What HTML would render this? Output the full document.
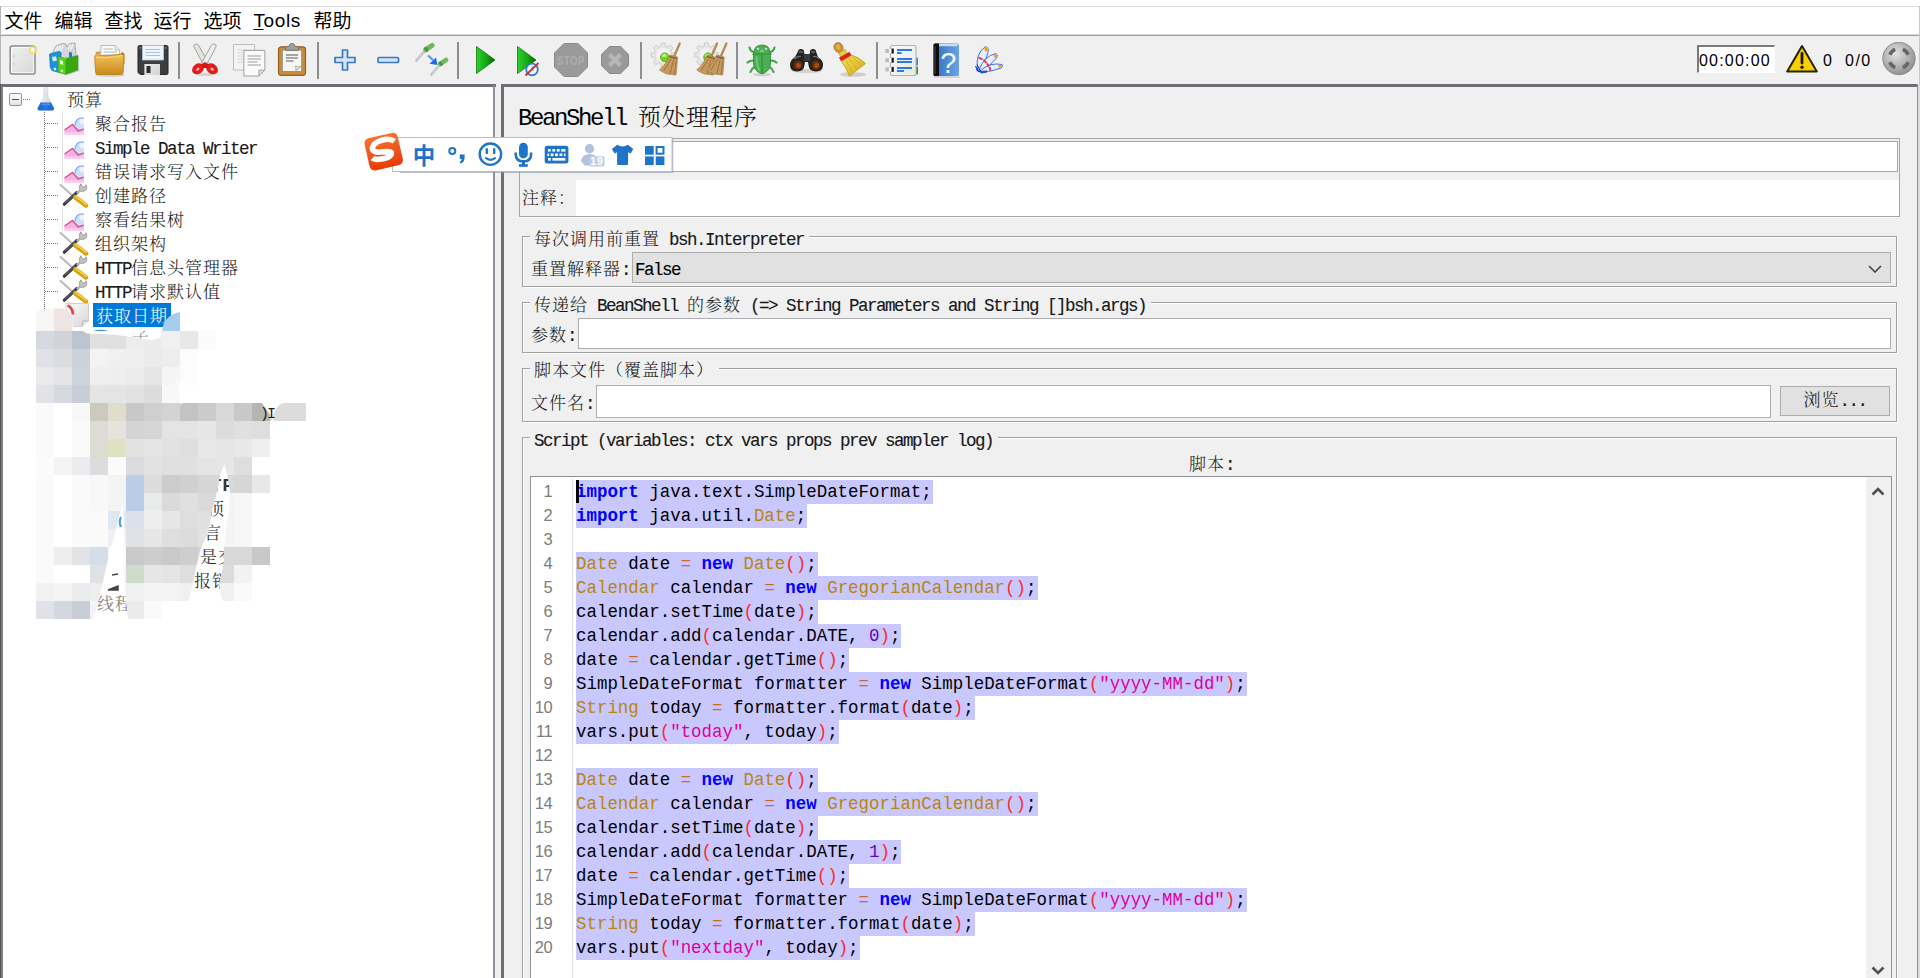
<!DOCTYPE html><html lang="zh-CN"><head><meta charset="utf-8"><title>Apache JMeter</title><style>*{box-sizing:border-box;margin:0;padding:0}
html,body{width:1920px;height:978px;overflow:hidden;background:#fff}
body{position:relative;font-family:"Liberation Mono","Noto Serif CJK SC",serif;font-size:17px;letter-spacing:1px;color:#000}
i{font-style:normal}
.l{font-family:"Liberation Mono",monospace;font-size:17.5px;letter-spacing:-1.5px;-webkit-text-stroke:.12px #000}
.l24{font-family:"Liberation Mono",monospace;font-size:24px;letter-spacing:-2.4px}
#topline{position:absolute;left:0;top:6px;width:1920px;height:1px;background:#dadada}
#leftline{position:absolute;left:0;top:6px;width:1px;height:80px;background:#b4b4b4}
#menubar{letter-spacing:0;position:absolute;left:1px;top:7px;width:1919px;height:27px;background:#fff;font-family:"Liberation Sans","Noto Sans CJK SC",sans-serif;font-size:19px}
.mi{position:absolute;top:1px;line-height:28px;white-space:nowrap;margin-left:-1.500px}
.mi.tools{letter-spacing:.6px;margin-left:-.5px;top:0}
.mi u{text-decoration-thickness:1px;text-underline-offset:2px}
#menuline{position:absolute;left:0;top:34px;width:1920px;height:2px;background:linear-gradient(#d8d8d8 0,#d8d8d8 50%,#a0a0a0 50%)}
#toolbar{position:absolute;left:1px;top:36px;width:1919px;height:48px;background:#f0f0f0}
.tbi{position:absolute;top:6px;width:36px;height:36px;margin-left:-1px}
.tbi svg{display:block}
.sep{position:absolute;top:6px;width:2px;height:37px;background:#8e8e8e;margin-left:-1px}
#timer{letter-spacing:0;position:absolute;left:1696px;top:9px;width:78px;height:28px;background:#fff;border:1px solid #7a7a7a;border-right-color:#fff;border-bottom-color:#fff;border-top-width:2px;border-left-width:2px;font-family:"Liberation Sans",sans-serif;font-size:16px;line-height:28px;white-space:nowrap;overflow:hidden}
#timer span{position:relative;left:0px;letter-spacing:1.2px}
.tbt{letter-spacing:0;position:absolute;top:15px;font-family:"Liberation Sans",sans-serif;font-size:16px;line-height:20px}
#treeframe{position:absolute}
#tree{position:absolute;left:0;top:84px;width:495px;height:894px;background:#fff;border-top:3px solid #6b6f75;border-left:3px solid #6b6f75;border-right:2px solid #8e939b;overflow:hidden}
#divider{position:absolute;left:495px;top:84px;width:6px;height:894px;background:#f0f0f0}
#divider:before{content:"";position:absolute;left:0;top:0;width:1px;height:3px;background:#6b6f75}
#tree>*{position:absolute}
.tt{line-height:19px;height:24px;padding-top:5px;white-space:nowrap;color:#1a1a1a}
.tt.sel{background:#0078d7;color:#fff;padding:5px 2px 0 3px;width:78px}
.ti{width:32px;height:24px}
.ti svg{display:block}
.exp{left:6px;top:6px;width:13px;height:13px;border:1px solid #919191;border-radius:2px;background:linear-gradient(#fff,#e4e4e4)}
.exp i{position:absolute;left:2px;top:5px;width:7px;height:1px;background:#3b4fa0}
.hdot{height:1px;background-image:linear-gradient(90deg,#777 50%,transparent 50%);background-size:2px 1px}
.vdot{width:1px;background-image:linear-gradient(#777 50%,transparent 50%);background-size:1px 2px}
.vdot2{width:1px;background-image:linear-gradient(#aaa 50%,transparent 50%);background-size:1px 2px}
#right{position:absolute;left:0;top:0;width:0;height:0}
#rightbg{position:absolute;left:501px;top:84px;width:1419px;height:894px;background:#f0f0f0;border-top:3px solid #6b6f75;border-left:3px solid #6b6f75}
#title{position:absolute;left:518px;top:105px;font-size:23px;letter-spacing:1px;line-height:28px;white-space:pre}
#namebox{position:absolute;left:519px;top:138px;width:1381px;height:79px;border:1px solid #a6a6a6;box-shadow:0 1px 0 #fafafa}
#namefield{position:absolute;left:56px;top:2px;width:1322px;height:31px;background:#fff;border:1px solid #a2a6b0}
#comment{position:absolute;left:56px;top:41px;width:1323px;height:36px;background:#fff}
.lb{position:absolute;line-height:20px;white-space:nowrap;color:#1a1a1a}
.grp{position:absolute;border:1px solid #a0a0a0;box-shadow:inset 1px 1px 0 #fff,1px 1px 0 #fff}
.gt{position:absolute;left:7px;top:-7px;line-height:20px;background:#f0f0f0;padding:0 5px 0 4px;white-space:pre;color:#1a1a1a}
.combo{position:absolute;background:#e1e1e1;border:1px solid #adadad}
.combo>span{position:absolute;left:2px;top:7px;line-height:20px}
.combo svg{position:absolute;right:8px;top:12px}
.tf{position:absolute;background:#fff;border:1px solid #abadb3}
.btn{position:absolute;background:#e1e1e1;border:1px solid #adadad;text-align:center;line-height:28px;color:#1a1a1a}
#editor{position:absolute;left:530px;top:476px;width:1362px;height:520px;background:#fff;border:1px solid #8e939b}
#gutter{letter-spacing:-.3px;position:absolute;left:0;top:2px;width:42px;height:100%;border-right:1px solid #e0e0e0;font-family:"Liberation Sans",sans-serif;font-size:16.5px;color:#7c7c7c;text-align:right;padding-right:19.5px;line-height:24px}
#code{letter-spacing:0;position:absolute;left:45px;top:3px;font-family:"Liberation Mono",monospace;font-size:17.45px;line-height:24px;white-space:nowrap}
#code div{height:24px;white-space:pre}
.hl{background:#c8c8ff;display:inline-block;height:24px;padding-right:1px}
.k{color:#0000ff;font-weight:bold}
.t{color:#b8860b}
.p{color:#ff2828}
.s{color:#dc009c}
.n{color:#6400c8}
.o{color:#d2691e}
#caret{position:absolute;left:45px;top:3px;width:3px;height:23px;background:#000}
#vsb{position:absolute;right:0;top:0;width:25px;height:100%;background:#f0f0f0}
#vsb svg{position:absolute;left:5px}
#rightedge{position:absolute;left:1917px;top:84px;width:3px;height:894px;background:#dcdcdc;border-left:1px solid #8a8f98}
#rightedge2{position:absolute;left:1919px;top:6px;width:1px;height:78px;background:#c8c8c8}
#ime{position:absolute;left:360px;top:128px;width:320px;height:52px}
#ime svg{display:block}
#mosaic{left:27px;top:203px;width:290px;height:340px}
#mosaic svg{display:block}
.tt,.lb,.gt,.btn,#title{font-weight:300}
.l,.l24{font-weight:400}
#leftdark{position:absolute;left:0;top:84px;width:1px;height:894px;background:#555}
#tree{border-left-color:#7c8088}
</style></head><body>
<div id="topline"></div><div id="leftline"></div><div id="menubar">
<span class="mi" style="left:5px">文件</span>
<span class="mi" style="left:55px">编辑</span>
<span class="mi" style="left:105px">查找</span>
<span class="mi" style="left:154px">运行</span>
<span class="mi" style="left:204px">选项</span>
<span class="mi tools" style="left:253px"><u>T</u>ools</span>
<span class="mi" style="left:314px">帮助</span>
</div><div id="menuline"></div>
<div id="toolbar">
<span class="tbi" style="left:4px"><svg width="36" height="36" viewBox="0 0 36 36"><defs>
<linearGradient id="gPaper" x1="0" y1="0" x2="1" y2="1"><stop offset="0" stop-color="#fdfdfd"/><stop offset="1" stop-color="#d6d6d6"/></linearGradient>
<linearGradient id="gFolder" x1="0" y1="0" x2="0" y2="1"><stop offset="0" stop-color="#f3c35a"/><stop offset="1" stop-color="#c98a1c"/></linearGradient>
<linearGradient id="gGreen" x1="0" y1="0" x2="1" y2="0"><stop offset="0" stop-color="#2fd12f"/><stop offset="0.6" stop-color="#12a012"/><stop offset="1" stop-color="#066006"/></linearGradient>
<linearGradient id="gBook" x1="0" y1="0" x2="1" y2="0"><stop offset="0" stop-color="#2f6fc0"/><stop offset="1" stop-color="#6aa4e6"/></linearGradient>
<radialGradient id="gRound" cx="0.4" cy="0.35" r="0.7"><stop offset="0" stop-color="#e2e2e2"/><stop offset="1" stop-color="#8c8c8c"/></radialGradient>
<linearGradient id="gSogou" x1="0" y1="0" x2="0" y2="1"><stop offset="0" stop-color="#f8722c"/><stop offset="1" stop-color="#e63c0a"/></linearGradient>
<linearGradient id="gBroom" x1="0" y1="0" x2="1" y2="1"><stop offset="0" stop-color="#f7e35c"/><stop offset="1" stop-color="#d4a514"/></linearGradient>
<linearGradient id="gFlask" x1="0" y1="0" x2="1" y2="0"><stop offset="0" stop-color="#f4f6f8"/><stop offset="1" stop-color="#c9ced6"/></linearGradient>
</defs><rect x="6.200" y="4" width="24.800" height="28" rx="2" fill="#fff" stroke="#8a8a8a" stroke-width="1.500"/><rect x="8" y="5.800" width="21.200" height="24.400" fill="url(#gPaper)"/><rect x="8" y="5.800" width="21.200" height="24.400" fill="#dedede" opacity=".45"/><circle cx="29.200" cy="8" r="3.400" fill="#fffde8" stroke="#f0e25a" stroke-width="2.200" opacity=".75"/><circle cx="9.600" cy="14.300" r=".9" fill="#fff" stroke="#aaa" stroke-width=".5"/><circle cx="9.600" cy="22.300" r=".9" fill="#fff" stroke="#aaa" stroke-width=".5"/></svg></span>
<span class="tbi" style="left:47px"><svg width="36" height="36" viewBox="0 0 36 36"><path d="M20 33l13-4.500-3-2z" fill="#000" opacity=".25"/><path d="M5.500 11l3.500-7 6-2.500 4 .5 1 3 2.500-3.500 5.500-.5 1 12-5 2.500-13 .5z" fill="#d2d6da" stroke="#9aa2aa" stroke-width=".8"/><path d="M8 9l3-5M10.500 9.500l3-6M13 10l3-6.500M21 7.500l2.500-5M23.500 8l2.500-5.500" stroke="#fbfbfb" stroke-width="1.100"/><path d="M2.600 12l9.400-2.500 2 .8V31l-9-2.500-1.800-3.500z" fill="#1d92dc" stroke="#0f6fb4" stroke-width=".7"/><path d="M22 10l3 .5v5l-3-.5z" fill="#1680cc"/><path d="M4.800 15l4.200-.8 1 4.200-4 1zM6.500 26l2.400-.4.400 2.300-2.200.5z" fill="#d4ecfb"/><path d="M11.400 14.500l7 2.500 12.600-3.500V27.500L18.500 32.500l-7.100-2.500z" fill="#3fbf14" stroke="#2a9a10" stroke-width=".7"/><path d="M18.500 17l12.500-3.500V27.500L18.500 32.500z" fill="#38a60e"/><path d="M11.400 14.500l7 2.500v15.500l-7-2.500z" fill="#58d01e"/><path d="M12.800 18l3.200 1 .3 4-3.300-1zM13.800 27.500l2 .6v2.200l-2-.6z" fill="#def7d2"/></svg></span>
<span class="tbi" style="left:92px"><svg width="36" height="36" viewBox="0 0 36 36"><ellipse cx="18" cy="33" rx="15" ry="1.800" fill="#000" opacity=".14"/><path d="M29 10.500h2q1.500 0 1.500 1.500v10h-3.500z" fill="#b98418"/><path d="M3.500 11.500q0-2 2-2h4l1.500 2.500h-7.500z" fill="#dba030"/><path d="M9 3.500h14l4.600 4.600v10H8.600z" fill="#fbfbfb" stroke="#b4b4b4" stroke-width=".9"/><path d="M23 3.500v4.600h4.600" fill="#e6e6e6" stroke="#b4b4b4" stroke-width=".7"/><path d="M11.500 7h9.500M11.500 10h13.500M11.500 13h13.500" stroke="#cfcfcf" stroke-width="1.300"/><path d="M2.800 14.500q0-2 2.200-1.800l5 .8q3 .5 6 .2l13-1.500q3-.3 2.900 2.300l-.7 15.500q0 2.500-2.500 2.500H6q-2.400 0-2.500-2.500z" fill="url(#gFolder)" stroke="#b98418" stroke-width=".9"/><path d="M4 15.200q8 1.500 26-1.500" stroke="#f8d880" stroke-width="1" fill="none"/></svg></span>
<span class="tbi" style="left:135px"><svg width="36" height="36" viewBox="0 0 36 36"><path d="M3 5q0-1.500 1.500-1.500h27q1.500 0 1.500 1.500v26q0 1.500-1.500 1.500H5.500L3 30.500z" fill="#3e3e40" stroke="#262628" stroke-width="1"/><rect x="7.500" y="3.500" width="21" height="14.500" fill="#eef4fb" stroke="#b4c8e0" stroke-width=".8"/><path d="M10.500 7.500h14.500M10.500 10.500h14.500M10.500 13.500h14.500" stroke="#a4c2e6" stroke-width="1.100"/><rect x="9.500" y="22" width="15.500" height="11" fill="#cfcfd1"/><rect x="9.500" y="22" width="15.500" height="11" fill="url(#gPaper)" opacity=".55"/><rect x="11.500" y="24" width="4" height="7" fill="#2e2e30"/><rect x="4.500" y="5" width="1.800" height="1.800" fill="#777"/><rect x="29.700" y="5" width="1.800" height="1.800" fill="#777"/></svg></span>
<i class="sep" style="left:178px"></i>
<span class="tbi" style="left:187px"><svg width="36" height="36" viewBox="0 0 36 36"><ellipse cx="18" cy="32.500" rx="9" ry="1.600" fill="#000" opacity=".12"/><path d="M6.700 4.200q.4-2.400 2.800-2.200 1.600.2 2.400 1.800l9.300 16.700-4.400 2.800z" fill="#e4e4e2" stroke="#a2a29c" stroke-width="1"/><path d="M29.300 4.200q-.4-2.400-2.800-2.200-1.600.2-2.400 1.800l-9.300 16.700 4.400 2.800z" fill="#eeeeec" stroke="#a2a29c" stroke-width="1"/><ellipse cx="11" cy="26.800" rx="6.300" ry="5" transform="rotate(-35 11 26.800)" fill="#e01c1c"/><ellipse cx="25" cy="26.800" rx="6.300" ry="5" transform="rotate(35 25 26.800)" fill="#e01c1c"/><path d="M14.500 22.500l3.500-2.500 3.500 2.500-1.500 3.500h-4z" fill="#d01414"/><ellipse cx="10.800" cy="27.200" rx="2" ry="1.300" transform="rotate(-35 10.800 27.200)" fill="#f6b0b0"/><ellipse cx="25.200" cy="27.200" rx="2" ry="1.300" transform="rotate(35 25.200 27.200)" fill="#f6b0b0"/></svg></span>
<span class="tbi" style="left:230px"><svg width="36" height="36" viewBox="0 0 36 36"><path d="M3.500 2.500h21v25.500H3.500z" fill="#f4f4f4" stroke="#bcbcbc" stroke-width="1"/><path d="M7 8h12M7 11h12M7 14h8M7 17h7M7 20h6" stroke="#d6d6d6" stroke-width="1.100"/><path d="M13.900 8.400h21v19.600l-6 6H13.900z" fill="#fafafa" stroke="#9e9e9e" stroke-width="1"/><path d="M28.900 34v-6h6z" fill="#dedede" stroke="#9e9e9e" stroke-width=".9"/><path d="M17.500 14h13.500M17.500 17h13.500M17.500 20h10M17.500 23h13.500" stroke="#bcbcbc" stroke-width="1.300"/></svg></span>
<span class="tbi" style="left:274px"><svg width="36" height="36" viewBox="0 0 36 36"><rect x="4.500" y="4.800" width="27" height="28.500" rx="2.800" fill="#c98d3a" stroke="#93621c" stroke-width="1.200"/><rect x="8.300" y="8" width="19.400" height="21.500" fill="#f5f5f3" stroke="#8e8e8a" stroke-width=".9"/><path d="M21.500 29.500q1-3-.5-5.500 3.500 1.500 6.700 0z" fill="#d8d8d4" stroke="#a4a4a0" stroke-width=".7"/><path d="M12 13h12M12 16h12M12 19h7.500" stroke="#8c8c88" stroke-width="1.300"/><path d="M11.500 8.300v-2.500q0-1.300 1.300-1.300h2q.5-3 3.200-3t3.200 3h2q1.300 0 1.300 1.300v2.500z" fill="#a2a29c" stroke="#6e6e68" stroke-width=".9"/></svg></span>
<i class="sep" style="left:317px"></i>
<span class="tbi" style="left:327px"><svg width="36" height="36" viewBox="0 0 36 36"><path d="M15.500 8h5v7.500h7.500v5h-7.500v7.500h-5v-7.500h-7.500v-5h7.500z" fill="#d4e3f6" stroke="#3b78c4" stroke-width="1.700" stroke-linejoin="round"/></svg></span>
<span class="tbi" style="left:370px"><svg width="36" height="36" viewBox="0 0 36 36"><rect x="8" y="15.500" width="20.500" height="5" rx="1" fill="#d4e3f6" stroke="#3b78c4" stroke-width="1.700"/></svg></span>
<span class="tbi" style="left:413px"><svg width="36" height="36" viewBox="0 0 36 36"><path d="M3.500 18.500L12.500 8" stroke="#b4baba" stroke-width="2.600" stroke-linecap="round"/><path d="M4 18L12.500 8" stroke="#f2f4f4" stroke-width="1" stroke-dasharray="1.500 1"/><path d="M12.800 7.600L19 3.500" stroke="#6fb85c" stroke-width="5" stroke-linecap="round"/><path d="M12 8.200l2.500-1.600" stroke="#4c9444" stroke-width="5"/><path d="M18.500 32.500L27 22.500" stroke="#b4baba" stroke-width="2.400" stroke-linecap="round"/><path d="M19 32L27 22.500" stroke="#f2f4f4" stroke-width="1" stroke-dasharray="1.500 1"/><path d="M27.300 21.800L33 18" stroke="#6fb85c" stroke-width="4.600" stroke-linecap="round"/><path d="M26.600 22.400l2.300-1.500" stroke="#4c9444" stroke-width="4.600"/><path d="M15 13.500l5 4.500" stroke="#4d92f4" stroke-width="2"/><path d="M24.500 23l-8-1.200 6.500-6.300z" fill="#1a6ef0"/></svg></span>
<i class="sep" style="left:457px"></i>
<span class="tbi" style="left:467px"><svg width="36" height="36" viewBox="0 0 36 36"><path d="M9.500 4.500v27L28 18z" fill="url(#gGreen)" stroke="#0a7a0a" stroke-width=".8" stroke-linejoin="round"/></svg></span>
<span class="tbi" style="left:510px"><svg width="36" height="36" viewBox="0 0 36 36"><path d="M7.500 4.500v27L26 18z" fill="url(#gGreen)" stroke="#0a7a0a" stroke-width=".8" stroke-linejoin="round"/><circle cx="22" cy="27.500" r="5.800" fill="#f4f8fc" stroke="#2f7bd0" stroke-width="1.800"/><path d="M22 24v3.500l2 1.500" stroke="#8fb4dc" stroke-width="1" fill="none"/><path d="M15.500 33.500l13-12.500" stroke="#e02828" stroke-width="1.800"/></svg></span>
<span class="tbi" style="left:553px"><svg width="36" height="36" viewBox="0 0 36 36"><path d="M11 1.500h14l9.500 9.500v14l-9.500 9.500h-14l-9.500-9.500v-14z" fill="#9a9a9a" stroke="#8a8a8a" stroke-width="1"/><text x="18" y="22.500" text-anchor="middle" font-family="Liberation Sans,sans-serif" font-weight="bold" font-size="12" fill="#aeaeae" textLength="28" lengthAdjust="spacingAndGlyphs">STOP</text></svg></span>
<span class="tbi" style="left:597px"><svg width="36" height="36" viewBox="0 0 36 36"><path d="M12.400 4.500h11.200l7.900 7.900v11.200l-7.900 7.900H12.400l-7.900-7.900V12.400z" fill="#9a9a9a" stroke="#8a8a8a" stroke-width="1"/><path d="M12.500 12.500l11 11M23.500 12.500l-11 11" stroke="#b6b6b6" stroke-width="4.200"/></svg></span>
<i class="sep" style="left:640px"></i>
<span class="tbi" style="left:648px"><svg width="36" height="36" viewBox="0 0 36 36"><path d="M13.1 1.0 L17.3 1.0 L17.3 4.1 L20.0 5.2 L22.2 3.0 L25.2 6.0 L23.0 8.2 L24.1 10.9 L27.2 10.9 L27.2 15.1 L24.1 15.1 L23.0 17.8 L25.2 20.0 L22.2 23.0 L20.0 20.8 L17.3 21.9 L17.3 25.0 L13.1 25.0 L13.1 21.9 L10.4 20.8 L8.2 23.0 L5.2 20.0 L7.4 17.8 L6.3 15.1 L3.2 15.1 L3.2 10.9 L6.3 10.9 L7.4 8.2 L5.2 6.0 L8.2 3.0 L10.4 5.2 L13.1 4.1z" fill="#e6e6e6" stroke="#cdcdcd" stroke-width="1" stroke-linejoin="round"/><circle cx="15.200" cy="13" r="7" fill="#f2f2f2"/><circle cx="16.800" cy="15.300" r="4.400" fill="#76d41e" stroke="#55aa10" stroke-width=".8"/><ellipse cx="16.200" cy="13.600" rx="2.400" ry="1.500" fill="#c8f294"/><g transform="translate(0 0)"><path d="M31.700 1.500L26.500 13.500" stroke="#b08850" stroke-width="2.200" stroke-linecap="round"/><path d="M22 13l7.500 2q-.5 9-1.500 18l-9-1q-4-1.500-7.500-4 7-6 10.500-15z" fill="#c49a62" stroke="#a67c44" stroke-width=".7"/><path d="M23 17l-7 11.500M25.500 18l-3.500 14M28 19l-1.500 14" stroke="#9c7038" stroke-width=".9"/><path d="M21.500 14.500l7.500 2.200" stroke="#8a6030" stroke-width="1.500"/></g></svg></span>
<span class="tbi" style="left:693px"><svg width="36" height="36" viewBox="0 0 36 36"><g transform="translate(-1.700 0)"><path d="M13.1 1.0 L17.3 1.0 L17.3 4.1 L20.0 5.2 L22.2 3.0 L25.2 6.0 L23.0 8.2 L24.1 10.9 L27.2 10.9 L27.2 15.1 L24.1 15.1 L23.0 17.8 L25.2 20.0 L22.2 23.0 L20.0 20.8 L17.3 21.9 L17.3 25.0 L13.1 25.0 L13.1 21.9 L10.4 20.8 L8.2 23.0 L5.2 20.0 L7.4 17.8 L6.3 15.1 L3.2 15.1 L3.2 10.9 L6.3 10.9 L7.4 8.2 L5.2 6.0 L8.2 3.0 L10.4 5.2 L13.1 4.1z" fill="#e6e6e6" stroke="#cdcdcd" stroke-width="1" stroke-linejoin="round"/><circle cx="15.200" cy="13" r="7" fill="#f2f2f2"/><circle cx="16.800" cy="15.300" r="4.400" fill="#76d41e" stroke="#55aa10" stroke-width=".8"/><ellipse cx="16.200" cy="13.600" rx="2.400" ry="1.500" fill="#c8f294"/></g><g transform="translate(-7.7 0)"><path d="M31.700 1.500L26.500 13.500" stroke="#b08850" stroke-width="2.200" stroke-linecap="round"/><path d="M22 13l7.500 2q-.5 9-1.500 18l-9-1q-4-1.500-7.500-4 7-6 10.500-15z" fill="#c49a62" stroke="#a67c44" stroke-width=".7"/><path d="M23 17l-7 11.500M25.500 18l-3.500 14M28 19l-1.500 14" stroke="#9c7038" stroke-width=".9"/><path d="M21.500 14.500l7.500 2.200" stroke="#8a6030" stroke-width="1.500"/></g><g transform="translate(1.7 0)"><path d="M31.700 1.500L26.500 13.500" stroke="#b08850" stroke-width="2.200" stroke-linecap="round"/><path d="M22 13l7.500 2q-.5 9-1.500 18l-9-1q-4-1.500-7.500-4 7-6 10.500-15z" fill="#c49a62" stroke="#a67c44" stroke-width=".7"/><path d="M23 17l-7 11.500M25.500 18l-3.500 14M28 19l-1.500 14" stroke="#9c7038" stroke-width=".9"/><path d="M21.500 14.500l7.500 2.200" stroke="#8a6030" stroke-width="1.500"/></g></svg></span>
<i class="sep" style="left:736px"></i>
<span class="tbi" style="left:744px"><svg width="36" height="36" viewBox="0 0 36 36"><ellipse cx="18" cy="32.500" rx="9" ry="1.800" fill="#000" opacity=".13"/><path d="M10.500 10.500q-4-1-5-5M25.500 10.500q4-1 5-5M9.500 18.500q-4 0-6 2M26.500 18.500q4 0 6 2M10.500 25q-3 1.500-4 5M25.500 25q3 1.500 4 5" stroke="#4aa252" stroke-width="2.200" stroke-linecap="round" fill="none"/><path d="M10 11q0-8 8-8t8 8l1.500 1.500H8.500z" fill="#4cb052" stroke="#2e8436" stroke-width=".8"/><circle cx="14" cy="6.800" r="1.100" fill="#bfe8ff"/><circle cx="22" cy="6.800" r="1.100" fill="#bfe8ff"/><path d="M15.500 10l2.500-3 2.500 3z" fill="#7fd086"/><path d="M9.500 14q0-2 2-2h13q2 0 2 2v7q0 8-8.500 11-8.500-3-8.500-11z" fill="#48b050" stroke="#2e8436" stroke-width=".8"/><path d="M18 12.500v19" stroke="#2e8436" stroke-width="1"/><path d="M12.500 14.500q0 10 3.500 14" stroke="#8fd894" stroke-width="1.500" fill="none" opacity=".7"/></svg></span>
<span class="tbi" style="left:789px"><svg width="36" height="36" viewBox="0 0 36 36"><ellipse cx="18" cy="29" rx="15" ry="2" fill="#000" opacity=".12"/><path d="M9 9.500q0-2.500 3-2.500t3 2.500l.5 3h5l.5-3q0-2.500 3-2.500t3 2.500l2 5.500q5 3 5 8 0 6.500-7 6.500t-7.500-6.500l-.5-3h-3l-.5 3q-.5 6.500-7.500 6.500t-7-6.500q0-5 5-8z" fill="#232323"/><path d="M10 10h4M22 10h4" stroke="#6a6a6a" stroke-width="1.400"/><path d="M5.500 17q2.500-3 6.500-2.500M24 14.500q4-.5 6.500 2.500" stroke="#777" stroke-width="1.200" fill="none"/><rect x="15" y="12" width="6" height="7" fill="#3a3a3a"/><circle cx="8.900" cy="23" r="4.300" fill="#6a2c08"/><circle cx="27.100" cy="23" r="4.300" fill="#6a2c08"/><circle cx="9.400" cy="23.600" r="2.500" fill="#a84c0c"/><circle cx="27.600" cy="23.600" r="2.500" fill="#a84c0c"/></svg></span>
<span class="tbi" style="left:833px"><svg width="36" height="36" viewBox="0 0 36 36"><ellipse cx="20" cy="32.500" rx="13" ry="2.300" fill="#000" opacity=".14"/><ellipse cx="5.500" cy="5.500" rx="4.300" ry="5" transform="rotate(-25 5.500 5.500)" fill="#cf9436" stroke="#a8721c" stroke-width=".8"/><ellipse cx="5.200" cy="5" rx="1.800" ry="2.800" transform="rotate(-25 5.200 5)" fill="#e2b05a"/><path d="M5.500 11l6.500-3.500 2.500 4.500-6 4.500z" fill="#e6d030" stroke="#b8a010" stroke-width=".7"/><path d="M8.500 19.500L18.500 13q8 2.500 14 8.500l-16 12.500q-3-8-8-14.500z" fill="url(#gBroom)" stroke="#c4a010" stroke-width=".9"/><path d="M13 19q4 5 6 12M16 17q5 5 8.500 11M19 15q5 4 9.500 9" stroke="#d0ac1c" stroke-width=".9" fill="none"/><path d="M7 17.500L17.400 11.500" stroke="#e02020" stroke-width="4.200"/></svg></span>
<i class="sep" style="left:876px"></i>
<span class="tbi" style="left:884px"><svg width="36" height="36" viewBox="0 0 36 36"><rect x="30" y="15.500" width="4" height="8" rx="1" fill="#2f7fe0"/><rect x="30" y="24.500" width="4" height="8" rx="1" fill="#20a020"/><rect x="6.500" y="3.500" width="25.500" height="30" rx="2" fill="#f8f8f8" stroke="#b0b0b0" stroke-width="1.100"/><rect x="7.500" y="4.500" width="23.500" height="28" rx="1.500" fill="url(#gPaper)" opacity=".5"/><g stroke="#2a7ae4" stroke-width="1.800"><path d="M13 8h15M13 17h15M13 20h15M13 26h15"/><path d="M13 11h4.500M13 29h7"/></g><g><rect x="1.500" y="7" width="4" height="4" fill="#b8b8b8"/><rect x="5" y="7" width="3" height="4" fill="#fff"/><rect x="7.500" y="6.500" width="2.300" height="5" fill="#1a1a1a"/><rect x="1.500" y="16.200" width="4" height="4" fill="#b8b8b8"/><rect x="5" y="16.200" width="3" height="4" fill="#fff"/><rect x="7.500" y="15.700" width="2.300" height="5" fill="#1a1a1a"/><rect x="1.500" y="25.400" width="4" height="4" fill="#b8b8b8"/><rect x="5" y="25.400" width="3" height="4" fill="#fff"/><rect x="7.500" y="24.900" width="2.300" height="5" fill="#1a1a1a"/></g></svg></span>
<span class="tbi" style="left:929px"><svg width="36" height="36" viewBox="0 0 36 36"><path d="M5 35h26" stroke="#000" stroke-width="1.200" opacity=".18"/><rect x="4.500" y="1.500" width="25.500" height="32.500" rx="1.800" fill="url(#gBook)"/><path d="M7 2h21.500v2.200H7z" fill="#d4dce6"/><path d="M4.500 3q0-1.500 1.500-1.500h4v32.500H6q-1.500 0-1.500-1.500z" fill="#0e0e0e"/><path d="M6 4v28" stroke="#555" stroke-width=".8"/><text x="19.800" y="30.500" text-anchor="middle" font-family="Liberation Sans,sans-serif" font-size="29" fill="#f4f8ff">?</text></svg></span>
<span class="tbi" style="left:972px"><svg width="36" height="36" viewBox="0 0 36 36"><g stroke="#2f5fdc" stroke-width=".9" fill="#e6eeff"><path d="M5.500 27Q3 12 13.500 4.500q3.500 1 2.500 6-2 10-8.500 18z"/><path d="M7 28Q12 14 24 11.500q2.500 1.500.500 4.500-6 8-15.500 13z"/><path d="M8 29Q18 20 30 22.500q1.500 2-1 3.500-10 4-20 4z"/></g><path d="M3.500 24l3 6M5 22.500l4 7.500M7 29.500l8-.500M4 27.500l6 3.500M9 31l6-1" stroke="#1c44c8" stroke-width="1.100"/><path d="M12.200 6.500l2.800-1.800.8 3.800-2.400 1.500z" fill="#f2a01e"/><path d="M21.500 13.200l3-1.300.2 3-2.400 1.200z" fill="#f2a01e"/><path d="M26.500 22.700l3.500.2-.8 2.400-2.900.3z" fill="#f2a01e"/><path d="M6.500 15.500l4 2M11.500 17.500l3 3.500M15 21.500l2 3M17.500 25l1 3.500" stroke="#e03038" stroke-width="1.900"/></svg></span>
<div id="timer"><span>00:00:00</span></div>
<span class="tbi" style="left:1784px"><svg width="36" height="36" viewBox="0 0 36 36"><path d="M18 4L32.800 29.500H3.200z" fill="#f8d000" stroke="#2a2200" stroke-width="2" stroke-linejoin="round"/><path d="M18 11.500v9.500" stroke="#1a1a1a" stroke-width="2.800" stroke-linecap="round"/><circle cx="18" cy="25.300" r="1.700" fill="#1a1a1a"/></svg></span>
<span class="tbt" style="left:1822px">0</span><span class="tbt" style="left:1844px;letter-spacing:1.5px">0/0</span>
<span class="tbi" style="left:1881px"><svg width="36" height="36" viewBox="0 0 36 36"><circle cx="18" cy="16.500" r="16.300" fill="url(#gRound)" stroke="#8e8e8e" stroke-width="1"/><g fill="none" stroke="#666" stroke-width="3.600"><path d="M14.200 7.300a10 10 0 0 1 7.600 0" transform="rotate(45 18 16.500)"/><path d="M14.200 7.300a10 10 0 0 1 7.600 0" transform="rotate(135 18 16.500)"/><path d="M14.200 7.300a10 10 0 0 1 7.600 0" transform="rotate(225 18 16.500)"/><path d="M14.200 7.300a10 10 0 0 1 7.600 0" transform="rotate(315 18 16.500)"/></g></svg></span>
</div>
<div id="tree">
<i class="vdot" style="left:41px;top:25px;height:207px"></i>
<span class="exp"><i></i></span><i class="hdot" style="left:20px;top:12px;width:8px"></i>
<span class="ti" style="left:32px;top:0px"><svg width="32" height="24" viewBox="0 0 32 24" overflow="visible"><path d="M8.600 1h4.400v8.500l5.800 11.300q1 2.700-2 2.700H4.800q-3 0-2-2.700L8.600 9.500z" fill="url(#gFlask)" stroke="#cfd4da" stroke-width=".5"/><path d="M5.600 15.500h10.400l2.800 5.300q1 2.700-2 2.700H4.800q-3 0-2-2.700z" fill="#1d6fd8"/><path d="M6.500 17.200h8.600" stroke="#5b9cec" stroke-width="1.300"/><path d="M9.700 17.500v5M12 17.500v5" stroke="#3f86e4" stroke-width=".8"/><rect x="8" y=".3" width="5.600" height="1.500" fill="#e6e9ed"/></svg></span>
<span class="tt" style="left:64px;top:0px">预算</span>
<i class="hdot" style="left:42px;top:36px;width:14px"></i>
<span class="ti" style="left:59px;top:24px"><svg width="32" height="24" viewBox="0 0 32 24" overflow="visible"><path d="M.5 0v24" stroke="#c4c4c4" stroke-width="1" stroke-dasharray="1 1"/><path d="M.5 0v24" stroke="#e2e2e2" stroke-width="1"/><path d="M13 14.500q.5-6 4.500-7.200 2-.5 4.300-.5v11.500l-5.500 1.800z" fill="#cfe0ff"/><path d="M17 9q2-1.800 4.800-1.800v6q-3 2-4.800-4.200z" fill="#eef4ff"/><path d="M13 14.500q.5-6 4.500-7.200 2-.5 4.300-.5" fill="none" stroke="#86aef6" stroke-width="1.300"/><path d="M2.500 19l8-5.500 5.800 6.400 5.500-1.800v5.500H2.500z" fill="#f6b4e6"/><path d="M2.500 21.300h19.300v2.300H2.500z" fill="#f9ccee"/><path d="M2.500 19l8-5.500 5.800 6.400 5.500-1.800" fill="none" stroke="#d6508c" stroke-width="1.500"/></svg></span>
<span class="tt" style="left:92px;top:24px">聚合报告</span>
<i class="hdot" style="left:42px;top:60px;width:14px"></i>
<span class="ti" style="left:59px;top:48px"><svg width="32" height="24" viewBox="0 0 32 24" overflow="visible"><path d="M.5 0v24" stroke="#c4c4c4" stroke-width="1" stroke-dasharray="1 1"/><path d="M.5 0v24" stroke="#e2e2e2" stroke-width="1"/><path d="M13 14.500q.5-6 4.500-7.200 2-.5 4.300-.5v11.500l-5.500 1.800z" fill="#cfe0ff"/><path d="M17 9q2-1.800 4.800-1.800v6q-3 2-4.800-4.200z" fill="#eef4ff"/><path d="M13 14.500q.5-6 4.500-7.200 2-.5 4.300-.5" fill="none" stroke="#86aef6" stroke-width="1.300"/><path d="M2.500 19l8-5.500 5.800 6.400 5.500-1.800v5.500H2.500z" fill="#f6b4e6"/><path d="M2.500 21.300h19.300v2.300H2.500z" fill="#f9ccee"/><path d="M2.500 19l8-5.500 5.800 6.400 5.500-1.800" fill="none" stroke="#d6508c" stroke-width="1.500"/></svg></span>
<span class="tt" style="left:92px;top:48px"><span class="l">Simple Data Writer</span></span>
<i class="hdot" style="left:42px;top:84px;width:14px"></i>
<span class="ti" style="left:59px;top:72px"><svg width="32" height="24" viewBox="0 0 32 24" overflow="visible"><path d="M.5 0v24" stroke="#c4c4c4" stroke-width="1" stroke-dasharray="1 1"/><path d="M.5 0v24" stroke="#e2e2e2" stroke-width="1"/><path d="M13 14.500q.5-6 4.500-7.200 2-.5 4.300-.5v11.500l-5.500 1.800z" fill="#cfe0ff"/><path d="M17 9q2-1.800 4.800-1.800v6q-3 2-4.800-4.200z" fill="#eef4ff"/><path d="M13 14.500q.5-6 4.500-7.200 2-.5 4.300-.5" fill="none" stroke="#86aef6" stroke-width="1.300"/><path d="M2.500 19l8-5.500 5.800 6.400 5.500-1.800v5.500H2.500z" fill="#f6b4e6"/><path d="M2.500 21.300h19.300v2.300H2.500z" fill="#f9ccee"/><path d="M2.500 19l8-5.500 5.800 6.400 5.500-1.800" fill="none" stroke="#d6508c" stroke-width="1.500"/></svg></span>
<span class="tt" style="left:92px;top:72px">错误请求写入文件</span>
<i class="hdot" style="left:42px;top:108px;width:14px"></i>
<span class="ti" style="left:59px;top:96px"><svg width="32" height="24" viewBox="0 0 32 24" overflow="visible"><path d="M-1.500 1.800L11.500 13.500" stroke="#9a9a9a" stroke-width="1.700" stroke-linecap="round"/><path d="M-1.500 1.800L11 13" stroke="#e8e8e8" stroke-width=".7"/><path d="M2.300 21.200L14.500 9.800" stroke="#3c3c3c" stroke-width="3.200" stroke-linecap="round"/><path d="M3 20L13 10.600" stroke="#7a7a7a" stroke-width=".8"/><path d="M14.500 9.800l3-3q-1.200-3.600 1.400-6l1.400 2.900 2.400.4 1.300-2.400q2 3.200-.6 5.800-2.400 1.600-5.300.7l-2.200 2.700z" fill="#c2c2c2" stroke="#8c8c8c" stroke-width=".7"/><path d="M13.300 14.300L24 22.300" stroke="#d9a010" stroke-width="4.600" stroke-linecap="round"/><path d="M13.800 13.600L24.300 21.300" stroke="#f7d548" stroke-width="1.600" stroke-linecap="round"/></svg></span>
<span class="tt" style="left:92px;top:96px">创建路径</span>
<i class="hdot" style="left:42px;top:132px;width:14px"></i>
<span class="ti" style="left:59px;top:120px"><svg width="32" height="24" viewBox="0 0 32 24" overflow="visible"><path d="M.5 0v24" stroke="#c4c4c4" stroke-width="1" stroke-dasharray="1 1"/><path d="M.5 0v24" stroke="#e2e2e2" stroke-width="1"/><path d="M13 14.500q.5-6 4.500-7.200 2-.5 4.300-.5v11.500l-5.500 1.800z" fill="#cfe0ff"/><path d="M17 9q2-1.800 4.800-1.800v6q-3 2-4.800-4.200z" fill="#eef4ff"/><path d="M13 14.500q.5-6 4.500-7.200 2-.5 4.300-.5" fill="none" stroke="#86aef6" stroke-width="1.300"/><path d="M2.500 19l8-5.500 5.800 6.400 5.500-1.800v5.500H2.500z" fill="#f6b4e6"/><path d="M2.500 21.300h19.300v2.300H2.500z" fill="#f9ccee"/><path d="M2.500 19l8-5.500 5.800 6.400 5.500-1.800" fill="none" stroke="#d6508c" stroke-width="1.500"/></svg></span>
<span class="tt" style="left:92px;top:120px">察看结果树</span>
<i class="hdot" style="left:42px;top:156px;width:14px"></i>
<span class="ti" style="left:59px;top:144px"><svg width="32" height="24" viewBox="0 0 32 24" overflow="visible"><path d="M-1.500 1.800L11.500 13.500" stroke="#9a9a9a" stroke-width="1.700" stroke-linecap="round"/><path d="M-1.500 1.800L11 13" stroke="#e8e8e8" stroke-width=".7"/><path d="M2.300 21.200L14.500 9.800" stroke="#3c3c3c" stroke-width="3.200" stroke-linecap="round"/><path d="M3 20L13 10.600" stroke="#7a7a7a" stroke-width=".8"/><path d="M14.500 9.800l3-3q-1.200-3.600 1.400-6l1.400 2.900 2.400.4 1.300-2.400q2 3.200-.6 5.800-2.400 1.600-5.300.7l-2.200 2.700z" fill="#c2c2c2" stroke="#8c8c8c" stroke-width=".7"/><path d="M13.300 14.300L24 22.300" stroke="#d9a010" stroke-width="4.600" stroke-linecap="round"/><path d="M13.800 13.600L24.300 21.300" stroke="#f7d548" stroke-width="1.600" stroke-linecap="round"/></svg></span>
<span class="tt" style="left:92px;top:144px">组织架构</span>
<i class="hdot" style="left:42px;top:180px;width:14px"></i>
<span class="ti" style="left:59px;top:168px"><svg width="32" height="24" viewBox="0 0 32 24" overflow="visible"><path d="M-1.500 1.800L11.500 13.500" stroke="#9a9a9a" stroke-width="1.700" stroke-linecap="round"/><path d="M-1.500 1.800L11 13" stroke="#e8e8e8" stroke-width=".7"/><path d="M2.300 21.200L14.500 9.800" stroke="#3c3c3c" stroke-width="3.200" stroke-linecap="round"/><path d="M3 20L13 10.600" stroke="#7a7a7a" stroke-width=".8"/><path d="M14.500 9.800l3-3q-1.200-3.600 1.400-6l1.400 2.900 2.400.4 1.300-2.400q2 3.200-.6 5.800-2.400 1.600-5.300.7l-2.200 2.700z" fill="#c2c2c2" stroke="#8c8c8c" stroke-width=".7"/><path d="M13.300 14.300L24 22.300" stroke="#d9a010" stroke-width="4.600" stroke-linecap="round"/><path d="M13.800 13.600L24.300 21.300" stroke="#f7d548" stroke-width="1.600" stroke-linecap="round"/></svg></span>
<span class="tt" style="left:92px;top:168px"><span class="l">HTTP</span>信息头管理器</span>
<i class="hdot" style="left:42px;top:204px;width:14px"></i>
<span class="ti" style="left:59px;top:192px"><svg width="32" height="24" viewBox="0 0 32 24" overflow="visible"><path d="M-1.500 1.800L11.500 13.500" stroke="#9a9a9a" stroke-width="1.700" stroke-linecap="round"/><path d="M-1.500 1.800L11 13" stroke="#e8e8e8" stroke-width=".7"/><path d="M2.300 21.200L14.500 9.800" stroke="#3c3c3c" stroke-width="3.200" stroke-linecap="round"/><path d="M3 20L13 10.600" stroke="#7a7a7a" stroke-width=".8"/><path d="M14.500 9.800l3-3q-1.200-3.600 1.400-6l1.400 2.900 2.400.4 1.300-2.400q2 3.200-.6 5.800-2.400 1.600-5.300.7l-2.200 2.700z" fill="#c2c2c2" stroke="#8c8c8c" stroke-width=".7"/><path d="M13.300 14.300L24 22.300" stroke="#d9a010" stroke-width="4.600" stroke-linecap="round"/><path d="M13.800 13.600L24.300 21.300" stroke="#f7d548" stroke-width="1.600" stroke-linecap="round"/></svg></span>
<span class="tt" style="left:92px;top:192px"><span class="l">HTTP</span>请求默认值</span>
<i class="hdot" style="left:42px;top:228px;width:14px"></i>
<span class="ti" style="left:59px;top:216px"><svg width="32" height="24" viewBox="0 0 32 24" overflow="visible"><path d="M4 .5h22.500v17.500l-6.500 5.500H4z" fill="url(#gPaper)" stroke="#c8c8c8" stroke-width=".8"/><path d="M20 23.500l1-5.500h5.500" fill="#e8e8e8" stroke="#aaa" stroke-width=".8"/><path d="M5.500 2.500q5 2 5.500 9" stroke="#e04848" stroke-width="2.800" fill="none"/></svg></span>
<span class="tt sel" style="left:90px;top:216px">获取日期</span>
<div id="mosaic"><svg width="290" height="340" viewBox="30 290 290 340"><path d="M36 331v-19q18-8 30 0q6 4 8 19z" fill="#f6f6f6"/><path d="M54 331v-22q12-3 18 6v16z" fill="#efe3e3"/><path d="M162 331q2-16 18-19v19z" fill="#a6cdf0"/><rect x="36" y="331" width="18" height="18" fill="#d5d8de"/><rect x="54" y="331" width="18" height="18" fill="#cfd3da"/><rect x="72" y="331" width="18" height="18" fill="#bcc4d0"/><rect x="90" y="331" width="18" height="18" fill="#e0e0e0"/><rect x="108" y="331" width="18" height="18" fill="#e0e0e0"/><rect x="126" y="331" width="18" height="18" fill="#ececec"/><rect x="144" y="331" width="18" height="18" fill="#ebebeb"/><rect x="162" y="331" width="18" height="18" fill="#f0f0f0"/><rect x="180" y="331" width="18" height="18" fill="#e8e8e8"/><rect x="198" y="331" width="18" height="18" fill="#fbfbfb"/><rect x="36" y="349" width="18" height="18" fill="#dfe1e6"/><rect x="54" y="349" width="18" height="18" fill="#dadce1"/><rect x="72" y="349" width="18" height="18" fill="#cdd1da"/><rect x="90" y="349" width="18" height="18" fill="#f3f3f3"/><rect x="108" y="349" width="18" height="18" fill="#f0f0f0"/><rect x="126" y="349" width="18" height="18" fill="#efefef"/><rect x="144" y="349" width="18" height="18" fill="#ebebeb"/><rect x="162" y="349" width="18" height="18" fill="#ededed"/><rect x="180" y="349" width="18" height="18" fill="#fcfcfc"/><rect x="36" y="367" width="18" height="18" fill="#eaeaec"/><rect x="54" y="367" width="18" height="18" fill="#e4e5e8"/><rect x="72" y="367" width="18" height="18" fill="#ced2db"/><rect x="90" y="367" width="18" height="18" fill="#efefef"/><rect x="108" y="367" width="18" height="18" fill="#eeeeee"/><rect x="126" y="367" width="18" height="18" fill="#ececec"/><rect x="144" y="367" width="18" height="18" fill="#e6e6e6"/><rect x="162" y="367" width="18" height="18" fill="#f5f5f5"/><rect x="180" y="367" width="18" height="18" fill="#fcfcfc"/><rect x="36" y="385" width="18" height="18" fill="#e1e3e7"/><rect x="54" y="385" width="18" height="18" fill="#d6dae0"/><rect x="72" y="385" width="18" height="18" fill="#c8cdd8"/><rect x="90" y="385" width="18" height="18" fill="#e4e4e4"/><rect x="108" y="385" width="18" height="18" fill="#e4e4e4"/><rect x="126" y="385" width="18" height="18" fill="#e2e2e2"/><rect x="144" y="385" width="18" height="18" fill="#dcdcdc"/><rect x="162" y="385" width="18" height="18" fill="#f8f8f8"/><rect x="36" y="403" width="18" height="18" fill="#fafafa"/><rect x="72" y="403" width="18" height="18" fill="#f8f8f8"/><rect x="90" y="403" width="18" height="18" fill="#cdcabd"/><rect x="108" y="403" width="18" height="18" fill="#e0ddcd"/><rect x="126" y="403" width="18" height="18" fill="#c8c8c8"/><rect x="144" y="403" width="18" height="18" fill="#cfcfcf"/><rect x="162" y="403" width="18" height="18" fill="#d3d3d3"/><rect x="180" y="403" width="18" height="18" fill="#c3c3c3"/><rect x="198" y="403" width="18" height="18" fill="#cbcbcb"/><rect x="216" y="403" width="18" height="18" fill="#d8d8d8"/><rect x="234" y="403" width="18" height="18" fill="#c8c8c8"/><rect x="252" y="403" width="18" height="18" fill="#b5b5b5"/><rect x="270" y="403" width="18" height="18" fill="#dcdcdc"/><rect x="288" y="403" width="18" height="18" fill="#dcdcdc"/><rect x="36" y="421" width="18" height="18" fill="#fafafa"/><rect x="72" y="421" width="18" height="18" fill="#fafafa"/><rect x="90" y="421" width="18" height="18" fill="#dcdbd5"/><rect x="108" y="421" width="18" height="18" fill="#e6e3dc"/><rect x="126" y="421" width="18" height="18" fill="#d4d4d4"/><rect x="144" y="421" width="18" height="18" fill="#d6d6d6"/><rect x="162" y="421" width="18" height="18" fill="#e4e4e4"/><rect x="180" y="421" width="18" height="18" fill="#e4e4e4"/><rect x="198" y="421" width="18" height="18" fill="#e6e6e6"/><rect x="216" y="421" width="18" height="18" fill="#dcdcdc"/><rect x="234" y="421" width="18" height="18" fill="#e0e0e0"/><rect x="252" y="421" width="18" height="18" fill="#dedede"/><rect x="36" y="439" width="18" height="18" fill="#fafafa"/><rect x="72" y="439" width="18" height="18" fill="#fafafa"/><rect x="90" y="439" width="18" height="18" fill="#dcdcd4"/><rect x="108" y="439" width="18" height="18" fill="#dfe2c0"/><rect x="126" y="439" width="18" height="18" fill="#e2e2e2"/><rect x="144" y="439" width="18" height="18" fill="#e4e4e4"/><rect x="162" y="439" width="18" height="18" fill="#e2e2e2"/><rect x="180" y="439" width="18" height="18" fill="#dedede"/><rect x="198" y="439" width="18" height="18" fill="#e8e8e8"/><rect x="216" y="439" width="18" height="18" fill="#e6e6e6"/><rect x="234" y="439" width="18" height="18" fill="#e8e8e8"/><rect x="252" y="439" width="18" height="18" fill="#efefef"/><rect x="36" y="457" width="18" height="18" fill="#fbfbfb"/><rect x="54" y="457" width="18" height="18" fill="#f3f3f3"/><rect x="72" y="457" width="18" height="18" fill="#ebecef"/><rect x="90" y="457" width="18" height="18" fill="#dcdcdc"/><rect x="108" y="457" width="18" height="18" fill="#fbfbfb"/><rect x="126" y="457" width="18" height="18" fill="#dadbde"/><rect x="144" y="457" width="18" height="18" fill="#e2e2e2"/><rect x="162" y="457" width="18" height="18" fill="#e0e0e0"/><rect x="180" y="457" width="18" height="18" fill="#e0e0e0"/><rect x="198" y="457" width="18" height="18" fill="#e4e4e4"/><rect x="216" y="457" width="18" height="18" fill="#e6e6e6"/><rect x="234" y="457" width="18" height="18" fill="#dedede"/><rect x="36" y="475" width="18" height="18" fill="#fafafa"/><rect x="72" y="475" width="18" height="18" fill="#fafafa"/><rect x="90" y="475" width="18" height="18" fill="#f8f8f8"/><rect x="108" y="475" width="18" height="18" fill="#f4f4f4"/><rect x="126" y="475" width="18" height="18" fill="#b9cde6"/><rect x="144" y="475" width="18" height="18" fill="#dcdcdc"/><rect x="162" y="475" width="18" height="18" fill="#cccccc"/><rect x="180" y="475" width="18" height="18" fill="#d0d0d0"/><rect x="198" y="475" width="18" height="18" fill="#d6d6d6"/><rect x="216" y="475" width="18" height="18" fill="#d8d8d8"/><rect x="234" y="475" width="18" height="18" fill="#d6d6d6"/><rect x="252" y="475" width="18" height="18" fill="#e8e8e8"/><rect x="36" y="493" width="18" height="18" fill="#fafafa"/><rect x="72" y="493" width="18" height="18" fill="#fafafa"/><rect x="90" y="493" width="18" height="18" fill="#f8f8f8"/><rect x="108" y="493" width="18" height="18" fill="#f4f4f4"/><rect x="126" y="493" width="18" height="18" fill="#b9cde6"/><rect x="144" y="493" width="18" height="18" fill="#e8ebea"/><rect x="162" y="493" width="18" height="18" fill="#dadada"/><rect x="180" y="493" width="18" height="18" fill="#e0e0e0"/><rect x="198" y="493" width="18" height="18" fill="#dadada"/><rect x="216" y="493" width="18" height="18" fill="#f4f4f4"/><rect x="234" y="493" width="18" height="18" fill="#f6f6f6"/><rect x="36" y="511" width="18" height="18" fill="#fafafa"/><rect x="72" y="511" width="18" height="18" fill="#fafafa"/><rect x="90" y="511" width="18" height="18" fill="#fafafa"/><rect x="108" y="511" width="18" height="18" fill="#dfe8f2"/><rect x="126" y="511" width="18" height="18" fill="#dae1ea"/><rect x="144" y="511" width="18" height="18" fill="#eeeeee"/><rect x="162" y="511" width="18" height="18" fill="#e6e6e6"/><rect x="180" y="511" width="18" height="18" fill="#dedede"/><rect x="198" y="511" width="18" height="18" fill="#e0e0e0"/><rect x="216" y="511" width="18" height="18" fill="#f4f4f4"/><rect x="234" y="511" width="18" height="18" fill="#f6f6f6"/><rect x="36" y="529" width="18" height="18" fill="#fafafa"/><rect x="72" y="529" width="18" height="18" fill="#fafafa"/><rect x="90" y="529" width="18" height="18" fill="#fafafa"/><rect x="108" y="529" width="18" height="18" fill="#eef0f3"/><rect x="126" y="529" width="18" height="18" fill="#e0e2e6"/><rect x="144" y="529" width="18" height="18" fill="#e6e6e6"/><rect x="162" y="529" width="18" height="18" fill="#dedede"/><rect x="180" y="529" width="18" height="18" fill="#dcdcdc"/><rect x="198" y="529" width="18" height="18" fill="#e2e2e2"/><rect x="216" y="529" width="18" height="18" fill="#f4f4f4"/><rect x="234" y="529" width="18" height="18" fill="#f6f6f6"/><rect x="36" y="547" width="18" height="18" fill="#fafafa"/><rect x="54" y="547" width="18" height="18" fill="#eceeee"/><rect x="72" y="547" width="18" height="18" fill="#e2e3e6"/><rect x="90" y="547" width="18" height="18" fill="#d5dde9"/><rect x="108" y="547" width="18" height="18" fill="#fafafa"/><rect x="126" y="547" width="18" height="18" fill="#c9c9c9"/><rect x="144" y="547" width="18" height="18" fill="#cdcdcd"/><rect x="162" y="547" width="18" height="18" fill="#c9c9c9"/><rect x="180" y="547" width="18" height="18" fill="#cecece"/><rect x="198" y="547" width="18" height="18" fill="#d4d4d4"/><rect x="216" y="547" width="18" height="18" fill="#d8d8d8"/><rect x="234" y="547" width="18" height="18" fill="#d8d8d8"/><rect x="252" y="547" width="18" height="18" fill="#c8c8c8"/><rect x="36" y="565" width="18" height="18" fill="#fafafa"/><rect x="90" y="565" width="18" height="18" fill="#dfe1e6"/><rect x="108" y="565" width="18" height="18" fill="#f4f4f4"/><rect x="126" y="565" width="18" height="18" fill="#d0dccb"/><rect x="144" y="565" width="18" height="18" fill="#e6e6e6"/><rect x="162" y="565" width="18" height="18" fill="#e4e4e4"/><rect x="180" y="565" width="18" height="18" fill="#dedede"/><rect x="198" y="565" width="18" height="18" fill="#e4e4e4"/><rect x="216" y="565" width="18" height="18" fill="#dcdcdc"/><rect x="234" y="565" width="18" height="18" fill="#f2f2f2"/><rect x="36" y="583" width="18" height="18" fill="#f2f2f2"/><rect x="54" y="583" width="18" height="18" fill="#f4f4f4"/><rect x="72" y="583" width="18" height="18" fill="#ebecee"/><rect x="90" y="583" width="18" height="18" fill="#eeeeee"/><rect x="108" y="583" width="18" height="18" fill="#f6f6f6"/><rect x="126" y="583" width="18" height="18" fill="#f0f0f0"/><rect x="144" y="583" width="18" height="18" fill="#f3f3f3"/><rect x="162" y="583" width="18" height="18" fill="#f3f3f3"/><rect x="180" y="583" width="18" height="18" fill="#f0f0f0"/><rect x="198" y="583" width="18" height="18" fill="#f4f4f4"/><rect x="216" y="583" width="18" height="18" fill="#f0f0f0"/><rect x="234" y="583" width="18" height="18" fill="#fafafa"/><rect x="36" y="601" width="18" height="18" fill="#e0e2e7"/><rect x="54" y="601" width="18" height="18" fill="#d3d7de"/><rect x="72" y="601" width="18" height="18" fill="#c9cdd8"/><rect x="90" y="601" width="18" height="18" fill="#f4f4f4"/><rect x="108" y="601" width="18" height="18" fill="#f0f0f0"/><rect x="126" y="601" width="18" height="18" fill="#ebebeb"/><rect x="144" y="601" width="18" height="18" fill="#fafafa"/><clipPath id="cwedge"><path d="M83 331h78v6q-6 4-14 2.500-30-6-60-6z"/></clipPath><path d="M83 331h78v6q-6 4-14 2.500-30-6-60-6z" fill="#fff"/><path d="M93 331q8-2.500 15 0z" fill="#3a8fe0"/><text x="132" y="343" font-family="Noto Serif CJK SC,serif" font-size="17" fill="#999" clip-path="url(#cwedge)">子</text><path d="M262 403l12 18h-3l4-10q4-8 10-8z" fill="#fff"/><text x="260" y="418" font-family="Liberation Mono,monospace" font-size="15" letter-spacing="-2" fill="#222">)I</text><path d="M175 375q8 14 7 30l-2-2q0-14-5-28z" fill="#fff"/><clipPath id="csp1"><path d="M224.300 464.400L227.400 475 230 492 229 512 226 530 224 547 223.500 565 219 584 221 595 223 601H188.700L192.400 585.800 196 567.400 200.700 549 209 530.600 211.700 512 217.300 492 220 475z"/></clipPath><clipPath id="csp2"><path d="M122.500 503L124.300 520 124.500 585 128 619H94L108 560z"/></clipPath><path d="M224.300 464.400L227.400 475 230 492 229 512 226 530 224 547 223.500 565 219 584 221 595 223 601H188.700L192.400 585.800 196 567.400 200.700 549 209 530.600 211.700 512 217.300 492 220 475z" fill="#fff"/><path d="M122.500 503L124.300 520 124.500 585 128 619H94L108 560z" fill="#fff"/><g clip-path="url(#csp1)" font-family="Noto Serif CJK SC,serif" font-size="17" fill="#333"><text x="211" y="491" font-family="Liberation Mono,monospace" font-size="17.500" font-weight="bold">TP</text><text x="207" y="514.500">顶</text><text x="204" y="538.500">言</text><text x="200" y="562.500">是交</text><text x="194" y="586.500">报销</text></g><g clip-path="url(#csp2)" font-family="Noto Serif CJK SC,serif" font-size="17" fill="#8a8a8a"><text x="97" y="610">线程</text><path d="M112 575l6-1M108 590l10-4v4z" stroke="#444" stroke-width="1.500" fill="#444"/></g><path d="M121 517q-2.500 5 0 10" stroke="#4aa0e8" stroke-width="2.200" fill="none"/></svg></div>
</div>
<div id="divider"></div><div id="rightbg"></div><div id="right">
<div id="title"><span class="l24">BeanShell </span>预处理程序</div>
<div id="namebox"><div id="namefield"></div><span class="lb" style="left:2px;top:51px">注释：</span><div id="comment"></div></div>
<div class="grp" style="left:522px;top:236px;width:1375px;height:51px"><i class="gi"></i><span class="gt">每次调用前重置<span class="l"> bsh.Interpreter</span></span><span class="lb" style="left:8px;top:23px">重置解释器<span class="l">:</span></span><div class="combo" style="left:109px;top:15px;width:1259px;height:31px"><span><span class="l">False</span></span><svg width="14" height="8" viewBox="0 0 14 8"><path d="M1 1l6 6 6-6" fill="none" stroke="#444" stroke-width="1.6"/></svg></div></div>
<div class="grp" style="left:522px;top:302px;width:1375px;height:51px"><i class="gi"></i><span class="gt">传递给<span class="l"> BeanShell </span>的参数<span class="l"> (=&gt; String Parameters and String []bsh.args)</span></span><span class="lb" style="left:8px;top:23px">参数<span class="l">:</span></span><div class="tf" style="left:55px;top:15px;width:1313px;height:31px"></div></div>
<div class="grp" style="left:522px;top:368px;width:1375px;height:54px"><i class="gi"></i><span class="gt">脚本文件（覆盖脚本）</span><span class="lb" style="left:8px;top:25px">文件名<span class="l">:</span></span><div class="tf" style="left:73px;top:16px;width:1175px;height:33px"></div><div class="btn" style="left:1257px;top:17px;width:110px;height:30px">浏览<span class="l">...</span></div></div>
<div class="grp" style="left:522px;top:437px;width:1375px;height:560px"><i class="gi"></i><span class="gt"><span class="l">Script (variables: ctx vars props prev sampler log)</span></span></div>
<span class="lb" style="left:1189px;top:455px">脚本<span class="l">:</span></span>
<div id="editor"><div id="gutter">
<div>1</div>
<div>2</div>
<div>3</div>
<div>4</div>
<div>5</div>
<div>6</div>
<div>7</div>
<div>8</div>
<div>9</div>
<div>10</div>
<div>11</div>
<div>12</div>
<div>13</div>
<div>14</div>
<div>15</div>
<div>16</div>
<div>17</div>
<div>18</div>
<div>19</div>
<div>20</div>
</div><div id="code">
<div><span class="hl"><b class="k">import</b> java.text.SimpleDateFormat;</span></div>
<div><span class="hl"><b class="k">import</b> java.util.<span class="t">Date</span>;</span></div>
<div>&nbsp;</div>
<div><span class="hl"><span class="t">Date</span> date <span class="o">=</span> <b class="k">new</b> <span class="t">Date</span><span class="p">(</span><span class="p">)</span>;</span></div>
<div><span class="hl"><span class="t">Calendar</span> calendar <span class="o">=</span> <b class="k">new</b> <span class="t">GregorianCalendar</span><span class="p">(</span><span class="p">)</span>;</span></div>
<div><span class="hl">calendar.setTime<span class="p">(</span>date<span class="p">)</span>;</span></div>
<div><span class="hl">calendar.add<span class="p">(</span>calendar.DATE, <span class="n">0</span><span class="p">)</span>;</span></div>
<div><span class="hl">date <span class="o">=</span> calendar.getTime<span class="p">(</span><span class="p">)</span>;</span></div>
<div><span class="hl">SimpleDateFormat formatter <span class="o">=</span> <b class="k">new</b> SimpleDateFormat<span class="p">(</span><span class="s">&quot;yyyy-MM-dd&quot;</span><span class="p">)</span>;</span></div>
<div><span class="hl"><span class="t">String</span> today <span class="o">=</span> formatter.format<span class="p">(</span>date<span class="p">)</span>;</span></div>
<div><span class="hl">vars.put<span class="p">(</span><span class="s">&quot;today&quot;</span>, today<span class="p">)</span>;</span></div>
<div>&nbsp;</div>
<div><span class="hl"><span class="t">Date</span> date <span class="o">=</span> <b class="k">new</b> <span class="t">Date</span><span class="p">(</span><span class="p">)</span>;</span></div>
<div><span class="hl"><span class="t">Calendar</span> calendar <span class="o">=</span> <b class="k">new</b> <span class="t">GregorianCalendar</span><span class="p">(</span><span class="p">)</span>;</span></div>
<div><span class="hl">calendar.setTime<span class="p">(</span>date<span class="p">)</span>;</span></div>
<div><span class="hl">calendar.add<span class="p">(</span>calendar.DATE, <span class="n">1</span><span class="p">)</span>;</span></div>
<div><span class="hl">date <span class="o">=</span> calendar.getTime<span class="p">(</span><span class="p">)</span>;</span></div>
<div><span class="hl">SimpleDateFormat formatter <span class="o">=</span> <b class="k">new</b> SimpleDateFormat<span class="p">(</span><span class="s">&quot;yyyy-MM-dd&quot;</span><span class="p">)</span>;</span></div>
<div><span class="hl"><span class="t">String</span> today <span class="o">=</span> formatter.format<span class="p">(</span>date<span class="p">)</span>;</span></div>
<div><span class="hl">vars.put<span class="p">(</span><span class="s">&quot;nextday&quot;</span>, today<span class="p">)</span>;</span></div>
</div><i id="caret"></i><div id="vsb"><svg style="top:10px" width="14" height="9" viewBox="0 0 14 9"><path d="M1.500 7.500l5.500-5.500 5.500 5.500" fill="none" stroke="#505050" stroke-width="2.600"/></svg><svg style="top:489px" width="14" height="9" viewBox="0 0 14 9"><path d="M1.500 1.500l5.500 5.500 5.500-5.500" fill="none" stroke="#505050" stroke-width="2.600"/></svg></div></div>
</div>
<div id="rightedge"></div><div id="rightedge2"></div><div id="leftdark"></div>
<div id="ime"><svg width="320" height="52" viewBox="360 128 320 52"><rect x="392.500" y="137.500" width="279.500" height="34" fill="#fff" stroke="#b4bfce" stroke-width="1"/><path d="M400 172.500h272.800v-34" fill="none" stroke="#8a94a4" stroke-width="1" opacity=".6"/><g transform="rotate(-13 383.700 151.700)"><rect x="366.700" y="135.200" width="34" height="33" rx="5" fill="url(#gSogou)"/><path d="M396.500 144q-4-4.500-12.500-3.800t-10.500 5.300q-1 4.400 6.500 5.700l8 1.400q4.500 1 2 3.800-3 2.600-10 2t-8.500-3" fill="none" stroke="#fff" stroke-width="5.600" stroke-linecap="butt"/></g><text x="424.400" y="163.600" text-anchor="middle" font-family="Liberation Sans,Noto Sans CJK SC,sans-serif" font-weight="bold" font-size="22.500" fill="#1f74c8">中</text><circle cx="452.300" cy="151" r="3" fill="none" stroke="#1f74c8" stroke-width="2"/><path d="M459.800 154.500h4.800v3.500q0 4-4.200 5.600l-.7-1.500q2-1 2-3.100h-1.900z" fill="#1f74c8"/><circle cx="490.400" cy="154.200" r="10.700" fill="none" stroke="#1f74c8" stroke-width="2.400"/><path d="M486.800 149.300v3.600M494.200 149.300v3.600" stroke="#1f74c8" stroke-width="2.400" stroke-linecap="round"/><path d="M485.300 157.500q5.200 4.600 10.400 0" fill="none" stroke="#1f74c8" stroke-width="2.200"/><rect x="519" y="142.800" width="8.800" height="15.600" rx="4.400" fill="#1f74c8"/><path d="M515.700 152.500v1.500q0 7.400 7.700 7.400t7.700-7.400v-1.500" fill="none" stroke="#1f74c8" stroke-width="2.600"/><path d="M523.400 161v4.500" stroke="#1f74c8" stroke-width="3"/><path d="M519 165.500h8.800" stroke="#1f74c8" stroke-width="2.600"/><rect x="544.700" y="145.700" width="23.700" height="17.900" rx="2.400" fill="#1f74c8"/><g fill="#fff"><rect x="548" y="149" width="2.800" height="2.600"/><rect x="552.400" y="149" width="2.800" height="2.600"/><rect x="556.800" y="149" width="2.800" height="2.600"/><rect x="561.200" y="149" width="4.200" height="2.600"/><rect x="547.500" y="153.500" width="1.600" height="2.600"/><rect x="550.700" y="153.500" width="2.800" height="2.600"/><rect x="555.100" y="153.500" width="2.800" height="2.600"/><rect x="559.500" y="153.500" width="2.800" height="2.600"/><rect x="563.900" y="153.500" width="1.600" height="2.600"/><rect x="548" y="158" width="2.800" height="2.600"/><rect x="552.400" y="158" width="13" height="2.600"/></g><circle cx="589.600" cy="148.800" r="4.700" fill="#b2c2dc"/><path d="M581 161q1.500-7 8.600-7 7 0 8.600 7l-2 4.500h-11.500z" fill="#b2c2dc"/><rect x="589.500" y="156.300" width="15" height="10.200" rx="1.500" fill="#c0cde2"/><text x="597" y="165.300" text-anchor="middle" font-family="Liberation Sans,sans-serif" font-weight="bold" font-size="10.500" fill="#fff">19</text><path d="M617.300 144.800q5.300 3.600 10.600 0l5.400 4.200-2.700 4.600-2.500-1.400v11.600q0 1.200-1.200 1.200h-8.600q-1.200 0-1.200-1.200v-11.600l-2.500 1.400-2.700-4.600z" fill="#1f74c8"/><rect x="645" y="146" width="8.700" height="8.700" fill="#1f74c8"/><rect x="656.600" y="147" width="6.900" height="6.700" fill="#fff" stroke="#1f74c8" stroke-width="2"/><rect x="645" y="156.400" width="8.700" height="8.700" fill="#1f74c8"/><rect x="655.700" y="156.400" width="8.700" height="8.700" fill="#1f74c8"/></svg></div>
</body></html>
